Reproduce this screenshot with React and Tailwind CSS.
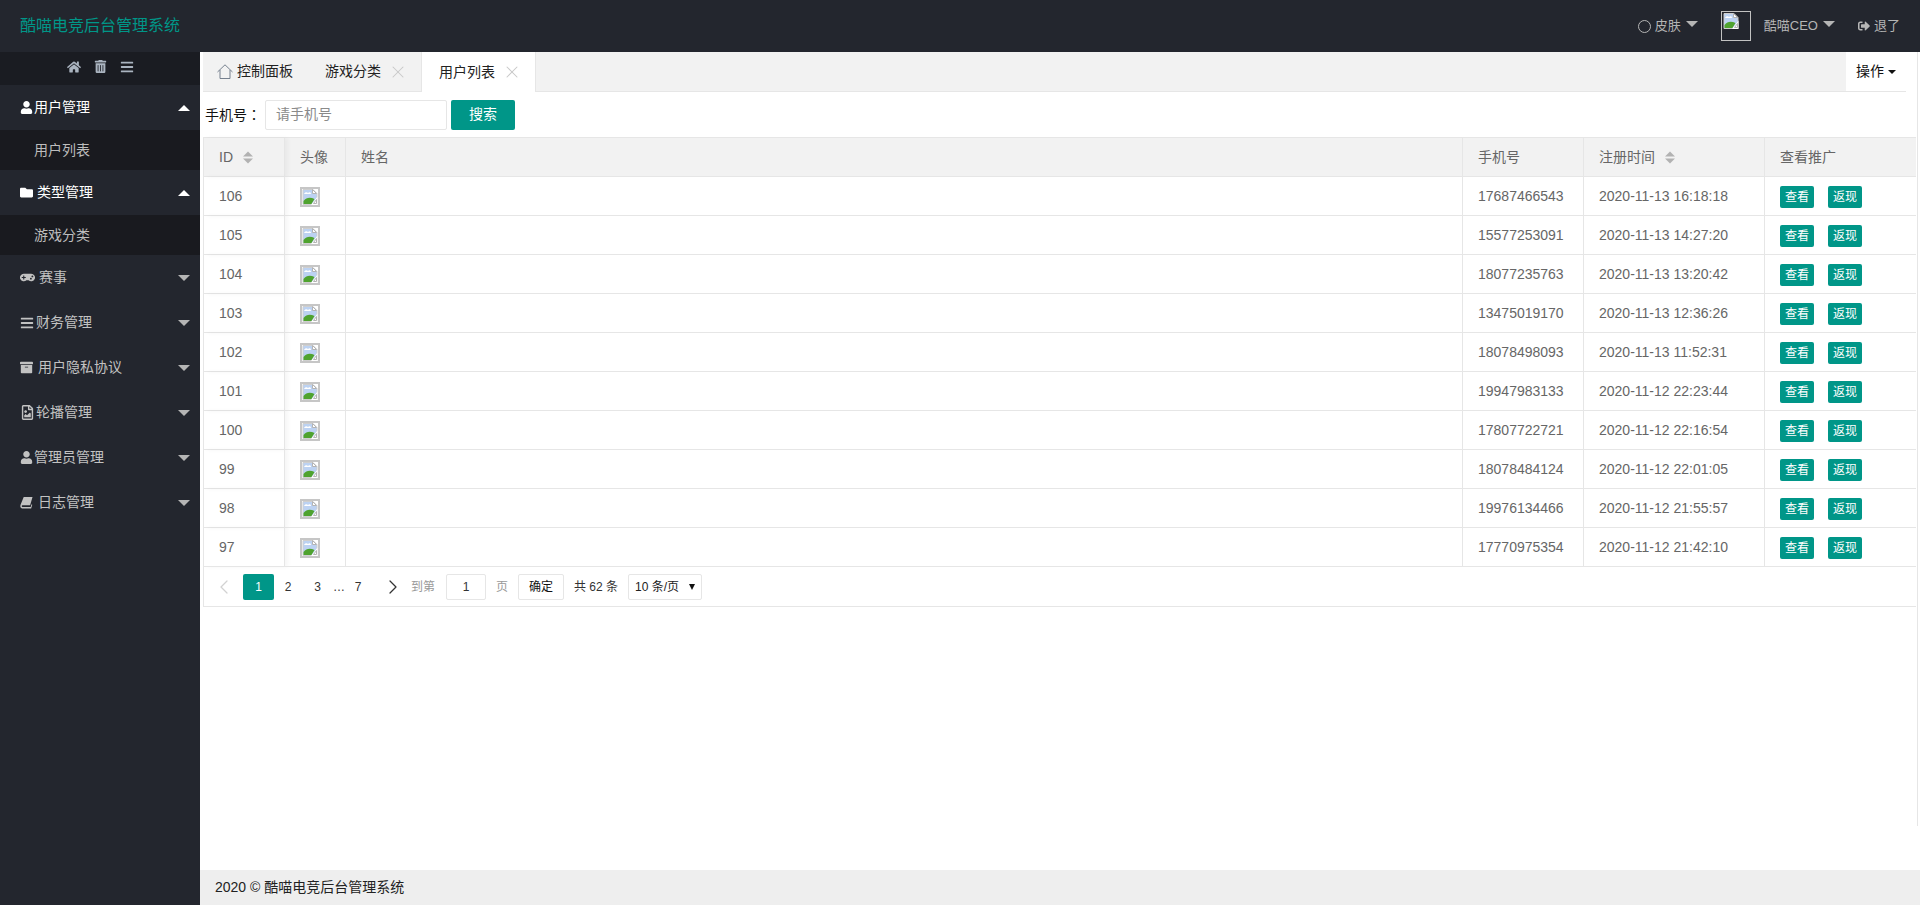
import { FaHome, FaTrashAlt, FaBars, FaUser, FaFolder, FaGamepad, FaArchive, FaRegFileImage, FaSignOutAlt } from 'react-icons/fa';
import { ChevronLeft, ChevronRight, X } from 'lucide-react';

const FONT = '[font-family:"Liberation_Sans","Noto_Sans_CJK_SC",sans-serif]';

const rows = [
    [106, '17687466543', '2020-11-13 16:18:18'],
    [105, '15577253091', '2020-11-13 14:27:20'],
    [104, '18077235763', '2020-11-13 13:20:42'],
    [103, '13475019170', '2020-11-13 12:36:26'],
    [102, '18078498093', '2020-11-13 11:52:31'],
    [101, '19947983133', '2020-11-12 22:23:44'],
    [100, '17807722721', '2020-11-12 22:16:54'],
    [99, '18078484124', '2020-11-12 22:01:05'],
    [98, '19976134466', '2020-11-12 21:55:57'],
    [97, '17770975354', '2020-11-12 21:42:10'],
];

// font awesome 4 book leans over, the packaged one doesn't
const SlantBook = ({ className }) => (
    <svg viewBox="0 0 14 14" className={className} fill="currentColor">
        <path d="M4 1h9.5l-2.6 9H2.6c-.9 0-1 1.8 0 1.8h8.9l.9-2.9.8.6-1.2 4H2.2C.6 13.500 0 11.500.5 9.800z" />
    </svg>
);

const menus = [
    { icon: FaUser, label: '用户管理', box: 'w-[14px]', size: 'text-[13px]', open: true, child: '用户列表' },
    { icon: FaFolder, label: '类型管理', box: 'w-[17px]', size: 'text-[13px]', open: true, child: '游戏分类' },
    { icon: FaGamepad, label: '赛事', box: 'w-[19px]', size: 'text-[15px]' },
    { icon: FaBars, label: '财务管理', box: 'w-[16px]', size: 'text-[14px]' },
    { icon: FaArchive, label: '用户隐私协议', box: 'w-[18px]', size: 'text-[13px]' },
    { icon: FaRegFileImage, label: '轮播管理', box: 'w-[16px]', size: 'text-[15px]' },
    { icon: FaUser, label: '管理员管理', box: 'w-[14px]', size: 'text-[13px]' },
    { icon: SlantBook, label: '日志管理', box: 'w-[18px]', size: 'h-[13px] w-[13px]' },
];

const Triangle = ({ up, className }) => (
    <svg viewBox="0 0 12 6" preserveAspectRatio="none" className={className} fill="currentColor">
        <polygon points={up ? '0,6 12,6 6,0' : '0,0 12,0 6,6'} />
    </svg>
);

// the broken image placeholder chrome draws
const BrokenImg = ({ className }) => (
    <svg viewBox="0 0 16 16" className={className}>
        <path d="M1 .5h10l4 4v11H1z" fill="#bcd2f2" stroke="#cfcfcf" />
        <path d="M2 5c1-2 3-2 4-1 1-1 3-1 3 1z" fill="#fff" />
        <path d="M1.500 15v-3c3-4 7-4 11-2l-3 5z" fill="#4fa32f" />
        <path d="M10.500.5v4h4z" fill="#fff" stroke="#b4b4b4" />
        <path d="M15.500 7.500L9 16h6.500z" fill="#fff" />
        <path d="M14.500 10.500v4H11.500z" fill="#fff" stroke="#b4b4b4" />
    </svg>
);

const SortIcon = () => (
    <svg viewBox="0 0 10 13" className="ml-[10px] inline-block h-[13px] w-[10px] align-[-2px] text-[#b2b2b2]" fill="currentColor">
        <polygon points="0,5.500 10,5.500 5,0.500" />
        <polygon points="0,7.500 10,7.500 5,12.500" />
    </svg>
);

const Sidebar = () => (
    <aside className="w-[200px] shrink-0 bg-[#23262e]">
        <div className="flex h-[33px] items-center justify-center gap-[13px] bg-[#1a1c22] pb-1 text-[14px] text-[#aab4c0]">
            <FaHome />
            <FaTrashAlt className="text-[13px]" />
            <FaBars />
        </div>
        {menus.map(({ icon: Icon, label, box, size, open, child }) => (
            <div key={label}>
                <div className={`flex h-[45px] items-center pl-5 pr-[10px] text-[14px] ${open ? 'text-white' : 'text-[#c2c2c2]'}`}>
                    <span className={`flex shrink-0 ${box}`}><Icon className={size} /></span>
                    {label}
                    <Triangle up={open} className={`ml-auto h-[6px] w-3 ${open ? 'text-white' : 'text-[#b5b5b5]'}`} />
                </div>
                {child && <div className="flex h-10 items-center bg-[#191a1f] pl-[34px] text-[14px] text-[#bdbdbd]">{child}</div>}
            </div>
        ))}
    </aside>
);

const Tab = ({ label, active }) => (
    <div className={`relative flex items-center ${active ? 'h-[40px] w-[115px] border-x border-[#e6e6e6] bg-white pl-[17px]' : 'h-[39px] w-[116px] pl-5'}`}>
        <span className="text-[#222]">{label}</span>
        <X className="ml-[7px] h-5 w-5 text-[#c8c8c8]" strokeWidth={1.25} />
    </div>
);

const TabBar = () => (
    <div className="ml-[3px] mr-[14px] flex h-[40px] border-b border-[#e6e6e6] bg-[#f2f2f2] text-[14px]">
        <div className="flex w-[102px] items-center pl-[14px] text-[#222]">
            <svg viewBox="0 0 16 15" className="mr-1 h-[15px] w-4 text-[#76808e]" fill="none" stroke="currentColor">
                <path d="M.5 8L8 .8 15.500 8M3 6v8.500h10V6" />
            </svg>
            控制面板
        </div>
        <Tab label="游戏分类" />
        <Tab label="用户列表" active />
        <div className="ml-auto flex h-[39px] w-[60px] items-center justify-center gap-1 bg-white text-[#111]">
            操作
            <Triangle className="h-1 w-2" />
        </div>
    </div>
);

const SearchBar = () => (
    <div className="flex h-[45px] items-center pl-[5px] text-[14px]">
        <span className="w-[60px] text-[#111]">手机号<span className="[font-family:'Noto_Sans_CJK_TC',sans-serif]">：</span></span>
        <div className="flex h-[30px] w-[182px] items-center rounded-[2px] border border-[#e6e6e6] pl-[10px] text-[#8a8a8a]">请手机号</div>
        <button className="ml-1 h-[30px] w-[64px] rounded-[2px] bg-[#009688] text-white">搜索</button>
    </div>
);

const Table = () => {
    const cell = 'border-b border-r border-[#e6e6e6] pl-[15px] font-normal';
    const fixed = 'shadow-[3px_0_4px_rgba(0,0,0,0.04)]';
    return (
        <div className="ml-[3px] mr-[4px] border-l border-t border-[#e6e6e6]">
            <table className="w-full table-fixed border-separate border-spacing-0 text-[14px] text-[#666]">
                <colgroup>
                    <col className="w-[81px]" />
                    <col className="w-[61px]" />
                    <col />
                    <col className="w-[121px]" />
                    <col className="w-[181px]" />
                    <col className="w-[151px]" />
                </colgroup>
                <thead>
                    <tr className="h-[39px] bg-[#f2f2f2] text-left">
                        <th className={`${cell} ${fixed}`}>ID<SortIcon /></th>
                        <th className={cell}>头像</th>
                        <th className={cell}>姓名</th>
                        <th className={cell}>手机号</th>
                        <th className={cell}>注册时间<SortIcon /></th>
                        <th className={`${cell} border-r-0`}>查看推广</th>
                    </tr>
                </thead>
                <tbody>
                    {rows.map(([id, phone, time]) => (
                        <tr key={id} className="h-[39px]">
                            <td className={`${cell} ${fixed}`}>{id}</td>
                            <td className={cell}>
                                <div className="mt-[2px] flex h-5 w-5 items-center justify-center border-2 border-[#c6c6c6]">
                                    <BrokenImg className="h-4 w-4 shrink-0" />
                                </div>
                            </td>
                            <td className={cell} />
                            <td className={cell}>{phone}</td>
                            <td className={cell}>{time}</td>
                            <td className={`${cell} border-r-0`}>
                                <div className="mt-[2px] flex gap-[14px]">
                                    <button className="h-[22px] w-[34px] rounded-[2px] bg-[#009688] text-[12px] text-white">查看</button>
                                    <button className="h-[22px] w-[34px] rounded-[2px] bg-[#009688] text-[12px] text-white">返现</button>
                                </div>
                            </td>
                        </tr>
                    ))}
                </tbody>
            </table>
        </div>
    );
};

const Pager = () => (
    <div className="ml-[3px] mr-[4px] flex h-[40px] items-center border-b border-l border-[#e6e6e6] text-[12px] text-[#333]">
        <ChevronLeft className="ml-2 h-6 w-6 text-[#d2d2d2]" strokeWidth={1.25} />
        <div className="ml-[7px] flex h-[26px] w-[31px] items-center justify-center rounded-[2px] bg-[#009688] text-white">1</div>
        <span className="w-[28px] text-center">2</span>
        <span className="w-[31px] text-center">3</span>
        <span className="w-[10px] text-center">…</span>
        <span className="w-[30px] text-center">7</span>
        <ChevronRight className="ml-2 h-6 w-6 text-[#333]" strokeWidth={1.25} />
        <span className="ml-[6px] text-[#999]">到第</span>
        <div className="ml-[11px] flex h-[26px] w-[40px] items-center justify-center rounded-[2px] border border-[#e6e6e6]">1</div>
        <span className="ml-[10px] text-[#999]">页</span>
        <div className="ml-[10px] flex h-[26px] w-[46px] items-center justify-center rounded-[2px] border border-[#e6e6e6] text-[#111]">确定</div>
        <span className="ml-[10px]">共 62 条</span>
        <div className="ml-[10px] flex h-[26px] w-[74px] items-center justify-between rounded-[2px] border border-[#e6e6e6] pl-[6px] pr-[6px] text-[#222]">
            10 条/页
            <Triangle className="h-[6px] w-[6px] text-[#111]" />
        </div>
    </div>
);

export default function App() {
    return (
        <div className={`flex h-[905px] flex-col overflow-hidden bg-white ${FONT}`}>
            <header className="flex h-[52px] shrink-0 items-center bg-[#23262e] pl-5 pr-5 text-[13px] text-[#b5b5b5]">
                <span className="text-[16px] text-[#009688]">酷喵电竞后台管理系统</span>
                <div className="ml-auto flex items-center">
                    <span className="mr-1 h-[13px] w-[13px] rounded-full border border-[#b5b5b5]" />
                    皮肤
                    <Triangle className="ml-[5px] mt-[-5px] h-[6px] w-3" />
                    <div className="ml-[23px] h-[30px] w-[30px] border border-[#c2c2c2] p-px">
                        <BrokenImg className="h-4 w-4" />
                    </div>
                    <span className="ml-[13px]">酷喵CEO</span>
                    <Triangle className="ml-[5px] mt-[-5px] h-[6px] w-3" />
                    <FaSignOutAlt className="ml-[23px] mr-1 text-[12px]" />
                    退了
                </div>
            </header>
            <div className="flex min-h-0 flex-1">
                <Sidebar />
                <main className="flex min-w-0 flex-1 flex-col">
                    <div className="relative flex-1">
                        <TabBar />
                        <SearchBar />
                        <Table />
                        <Pager />
                        <div className="absolute right-[2px] top-0 h-[774px] w-px bg-[#e6e6e6]" />
                    </div>
                    <footer className="flex h-[35px] items-center bg-[#eeeeee] pl-[15px] text-[14px] text-[#222]">2020 © 酷喵电竞后台管理系统</footer>
                </main>
            </div>
        </div>
    );
}
